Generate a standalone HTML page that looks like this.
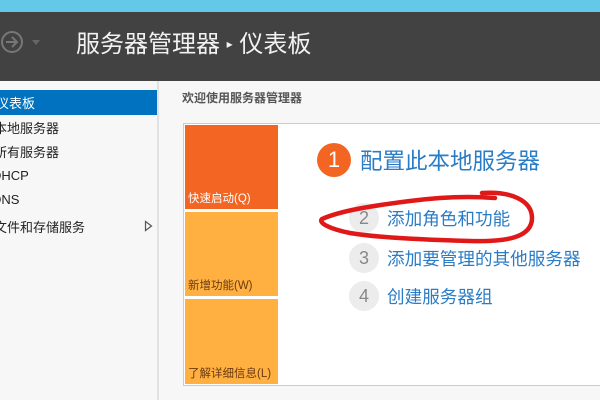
<!DOCTYPE html>
<html><head><meta charset="utf-8"><style>
body{margin:0;width:600px;height:400px;overflow:hidden;position:relative;background:#f7f7f7;font-family:"Liberation Sans","Noto Sans CJK SC",sans-serif}
div{position:absolute;box-sizing:border-box}
.side{font-size:13px;color:#222;left:0;white-space:nowrap}
.t{font-size:11.5px;left:3px;white-space:nowrap}
</style></head><body>
<div style="left:0;top:0;width:600px;height:12px;background:#64c8e8"></div>
<div style="left:0;top:12px;width:600px;height:69px;background:#424242"></div>
<svg style="position:absolute;left:0;top:30px" width="45" height="24"><circle cx="12" cy="12" r="10" fill="none" stroke="#777" stroke-width="2"/><path d="M6 12h11M12 7l5 5-5 5" fill="none" stroke="#777" stroke-width="2"/><path d="M32 10h8l-4 5z" fill="#666"/></svg>
<div style="left:76px;top:24px;font-size:24px;color:#f2f2f2;white-space:nowrap">服务器管理器 <span style="font-size:12px;vertical-align:4px">▸</span> 仪表板</div>
<div style="left:157px;top:81px;width:2px;height:319px;background:#e2e2e2"></div>
<div style="left:0;top:90px;width:157px;height:25px;background:#0072c0"></div>
<div class="side" style="left:-4px;top:93px;color:#fff">仪表板</div>
<div class="side" style="left:-6px;top:118px">本地服务器</div>
<div class="side" style="left:-6px;top:142px">所有服务器</div>
<div class="side" style="left:-8px;top:168px">DHCP</div>
<div class="side" style="left:-8px;top:192px">DNS</div>
<div class="side" style="left:-6px;top:217px">文件和存储服务</div>
<svg style="position:absolute;left:144px;top:220px" width="10" height="12"><path d="M1.5 1.5L7.5 6L1.5 10.5Z" fill="none" stroke="#555" stroke-width="1.2"/></svg>
<div style="left:182px;top:89px;font-size:12px;color:#555;font-weight:bold;white-space:nowrap">欢迎使用服务器管理器</div>
<div style="left:183px;top:123px;width:430px;height:263px;background:#fff;border:1px solid #ccc"></div>
<div style="left:185px;top:125px;width:93px;height:84px;background:#f26522"><span class="t" style="position:absolute;bottom:3px;color:#fff">快速启动(Q)</span></div>
<div style="left:185px;top:212px;width:93px;height:84px;background:#ffb040"><span class="t" style="position:absolute;bottom:3px;color:#6a3a10">新增功能(W)</span></div>
<div style="left:185px;top:299px;width:93px;height:85px;background:#ffb040"><span class="t" style="position:absolute;bottom:3px;color:#6a3a10">了解详细信息(L)</span></div>
<div style="left:317px;top:143px;width:34px;height:34px;border-radius:50%;background:#f26522;color:#fff;font-size:22px;text-align:center;line-height:34px">1</div>
<div style="left:360px;top:144px;font-size:22.5px;color:#2a7cc7;white-space:nowrap">配置此本地服务器</div>
<div style="left:349px;top:203px;width:30px;height:30px;border-radius:50%;background:#ececec;color:#888;font-size:18px;text-align:center;line-height:30px">2</div>
<div style="left:387px;top:206px;font-size:17.6px;color:#2a7cc7;white-space:nowrap">添加角色和功能</div>
<div style="left:349px;top:243px;width:30px;height:30px;border-radius:50%;background:#ececec;color:#888;font-size:18px;text-align:center;line-height:30px">3</div>
<div style="left:387px;top:246px;font-size:17.6px;color:#2a7cc7;white-space:nowrap">添加要管理的其他服务器</div>
<div style="left:349px;top:281px;width:30px;height:30px;border-radius:50%;background:#ececec;color:#888;font-size:18px;text-align:center;line-height:30px">4</div>
<div style="left:387px;top:284px;font-size:17.6px;color:#2a7cc7;white-space:nowrap">创建服务器组</div>
<svg style="position:absolute;left:0;top:0" width="600" height="400"><path d="M482 193C510 191 532 200 532 218C532 238 505 242 470 241C430 240 380 238 350 233C330 229 318 223 322 219C340 211 370 206 410 201C440 197 470 196 495 198" fill="none" stroke="#e01818" stroke-width="4.5" stroke-linecap="round"/></svg>
</body></html>
